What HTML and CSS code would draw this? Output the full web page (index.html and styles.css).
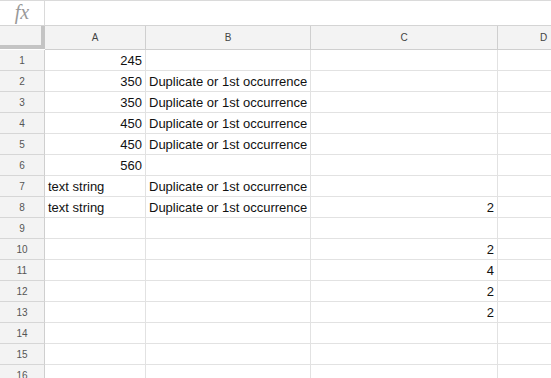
FILE: index.html
```html
<!DOCTYPE html>
<html lang="en">
<head>
    <meta charset="UTF-8">
    <title>Sheet</title>
    <link rel="stylesheet" href="styles.css">
</head>
<body>
    <div class="formula-bar">
        <div class="fx">fx</div>
        <div class="formula-input"></div>
    </div>

    <div class="grid">
        <div class="corner"></div>
        <div class="col-head">A</div>
        <div class="col-head">B</div>
        <div class="col-head">C</div>
        <div class="col-head last">D</div>
    </div>

    <div class="grid" id="rows"></div>

    <script>
        // rows of the sheet: [A, B, C]
        var dup = 'Duplicate or 1st occurrence';
        var data = [
            [245, '', ''],
            [350, dup, ''],
            [350, dup, ''],
            [450, dup, ''],
            [450, dup, ''],
            [560, '', ''],
            ['text string', dup, ''],
            ['text string', dup, 2],
            ['', '', ''],
            ['', '', 2],
            ['', '', 4],
            ['', '', 2],
            ['', '', 2],
            ['', '', ''],
            ['', '', ''],
            ['', '', '']
        ];

        var rows = document.getElementById('rows');

        function addCell(cls, value) {
            var div = document.createElement('div');
            div.className = cls;
            if (typeof value === 'number') div.className += ' num';
            div.textContent = value;
            rows.appendChild(div);
        }

        data.forEach(function(row, i) {
            addCell('row-head', i + 1);
            row.forEach(function(value) {
                addCell('cell', value);
            });
            addCell('cell last', '');
        });
    </script>
</body>
</html>
```

FILE: styles.css
```css
body {
    margin: 0;
    font-family: Arial, "Liberation Sans", sans-serif;
    background: #fff;
    overflow: hidden;
}

.formula-bar {
    display: flex;
    height: 24px;
    border-top: 1px solid #dadada;
    border-bottom: 1px solid #d4d4d4;
}

.fx {
    width: 44px;
    border-right: 1px solid #dadada;
    font-family: "Liberation Serif", "DejaVu Serif", serif;
    font-style: italic;
    font-size: 20px;
    color: #999;
    text-align: center;
    line-height: 23px;
}

.formula-input {
    flex: 1;
}

.grid {
    display: grid;
    grid-template-columns: 45px 101px 165px 187px 1fr;
}

.corner {
    height: 19px;
    background: #f3f3f3;
    border-right: 4px solid #c4c4c4;
    border-bottom: 4px solid #c4c4c4;
}

.col-head {
    height: 23px;
    background: #f3f3f3;
    border-right: 1px solid #cfcfcf;
    border-bottom: 1px solid #cfcfcf;
    font-size: 10px;
    color: #444;
    display: flex;
    align-items: center;
    justify-content: center;
}

.col-head.last {
    border-right: none;
    justify-content: flex-start;
    padding-left: 42px;
}

.row-head {
    height: 20px;
    background: #f3f3f3;
    border-right: 1px solid #cfcfcf;
    border-bottom: 1px solid #d6d6d6;
    font-size: 10px;
    color: #555;
    display: flex;
    align-items: center;
    justify-content: center;
}

.cell {
    height: 20px;
    border-right: 1px solid #e2e2e2;
    border-bottom: 1px solid #e2e2e2;
    font-size: 13px;
    color: #111;
    padding: 0 3px;
    display: flex;
    align-items: center;
    white-space: nowrap;
    overflow: hidden;
}

.cell.num {
    justify-content: flex-end;
}

.cell.last {
    border-right: none;
}
```
